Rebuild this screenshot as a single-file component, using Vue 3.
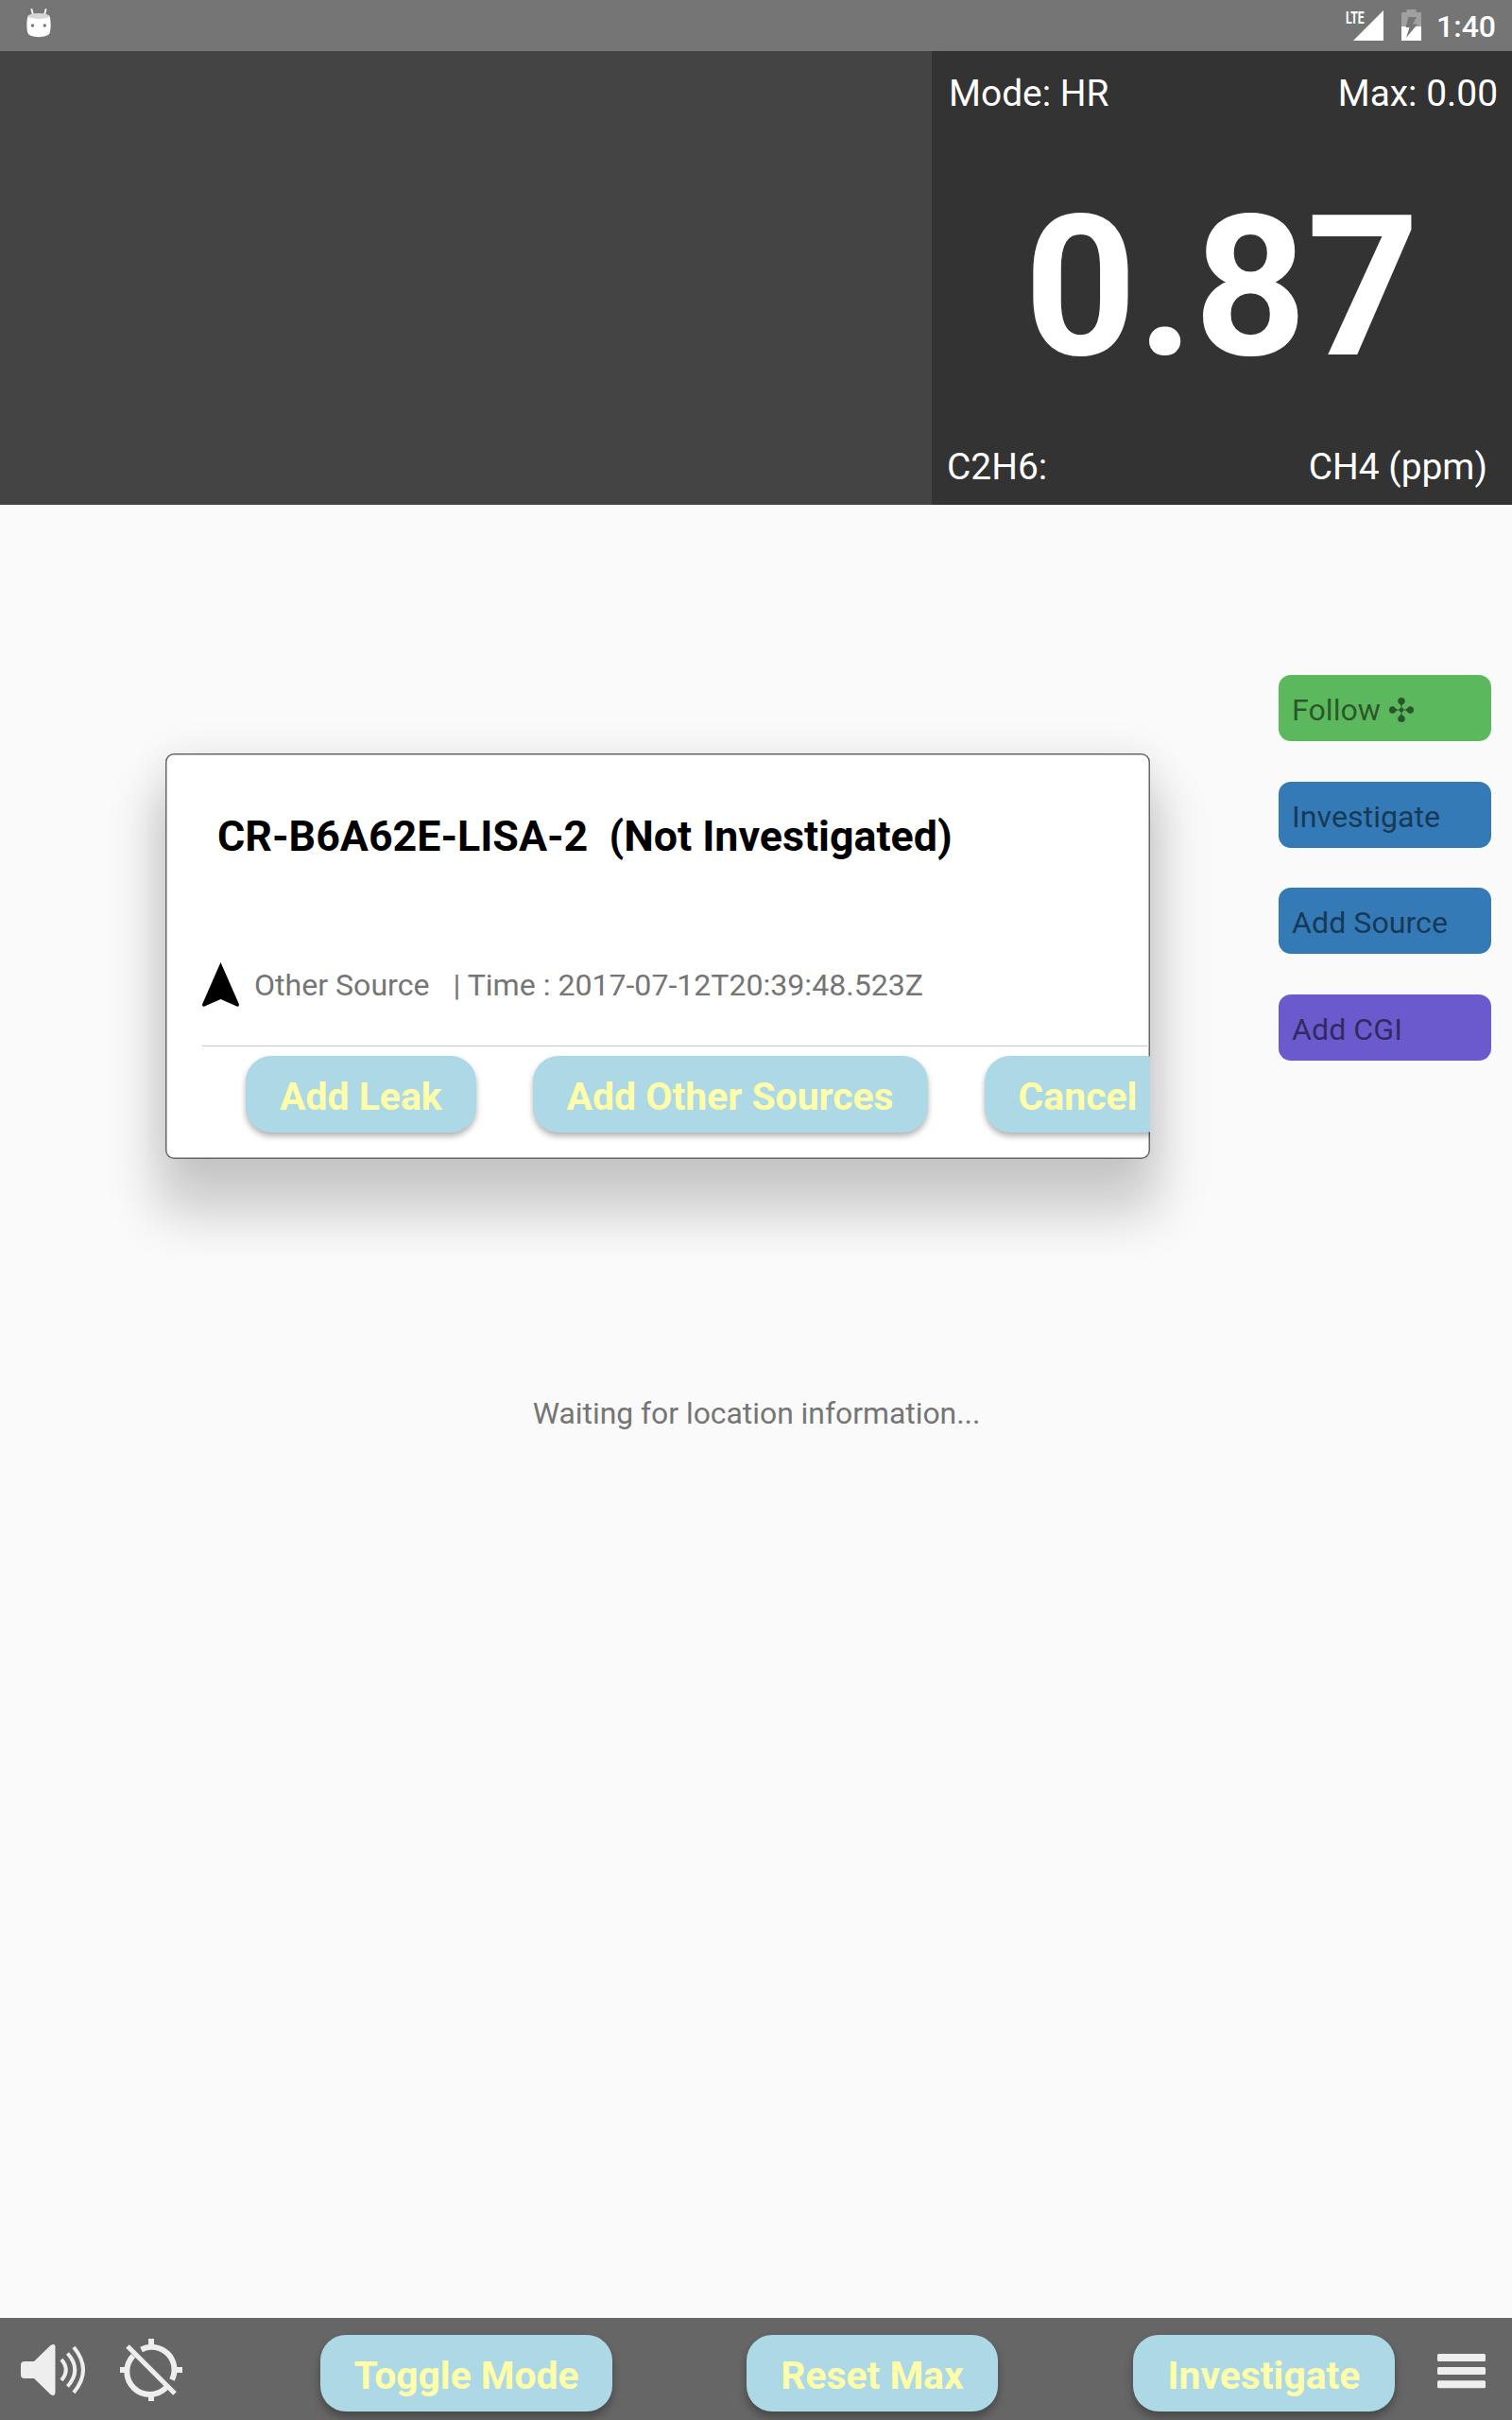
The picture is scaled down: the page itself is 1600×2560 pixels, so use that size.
<script setup>
const actions = [
  { label: 'Follow', color: '#5cb85c', icon: true },
  { label: 'Investigate', color: '#337ab7' },
  { label: 'Add Source', color: '#337ab7' },
  { label: 'Add CGI', color: '#6a5acd' },
]
const choices = ['Add Leak', 'Add Other Sources', 'Cancel']
</script>

<template>
  <div class="screen">
    <header class="status">
      <svg class="droid" width="26" height="31" viewBox="0 0 26 31">
        <path d="M5.500 1 7 7M20.500 1 19 7" stroke="#fff" stroke-width="1.8" stroke-linecap="round" />
        <path d="M1.500 8C0 13 0 22 1.500 26 3 31.500 23 31.500 24.500 26 26 22 26 13 24.500 8Z" fill="#fff" />
        <ellipse cx="13" cy="8" rx="11.500" ry="3" fill="#d6d6d6" />
        <circle cx="6.500" cy="18" r="1.700" fill="#757575" />
        <circle cx="19.300" cy="18" r="1.700" fill="#757575" />
      </svg>
      <div class="system">
        <div class="signal">
          <span class="lte">LTE</span>
          <svg width="32" height="32" viewBox="0 0 32 32"><path d="M32 0V32H0Z" fill="#fff" /></svg>
        </div>
        <svg class="battery" width="21" height="33" viewBox="0 0 21 33">
          <path d="M5.500 0H15.500V3H21V33H0V3H5.500Z" fill="#a0a0a0" />
          <path d="M0 18H21V33H0Z" fill="#fff" />
          <path d="M7.500 8H16L12 15.500H17L5 30 8.500 19H4.500Z" fill="#757575" />
        </svg>
        <span class="clock">1:40</span>
      </div>
    </header>

    <section class="readout">
      <div class="chart"></div>
      <div class="meter">
        <div class="row top"><span>Mode: HR</span><span>Max: 0.00</span></div>
        <div class="value">0.87</div>
        <div class="row bottom"><span>C2H6:</span><span>CH4 (ppm)</span></div>
      </div>
    </section>

    <main class="map">
      <p class="waiting">Waiting for location information...</p>

      <div class="actions">
        <button v-for="a in actions" :key="a.label" class="action" :style="{ background: a.color }">
          <span>{{ a.label }}</span>
          <svg v-if="a.icon" class="club" width="26" height="26" viewBox="0 0 26 26">
            <g v-for="r in [0, 90, 180, 270]" :key="r" :transform="`rotate(${r} 13 13)`">
              <path d="M12.500 13V8.500C12 6.800 9.200 6.300 9.200 3.800A3.800 3.800 0 0 1 16.800 3.800C16.800 6.300 14 6.800 13.500 8.500V13Z" />
            </g>
            <circle cx="13" cy="13" r="2.300" />
          </svg>
        </button>
      </div>

      <article class="card">
        <div class="clip">
          <h2>CR-B6A62E-LISA-2&nbsp; (Not Investigated)</h2>
          <div class="details">
            <svg class="arrow" width="39" height="47" viewBox="0 0 39 47">
              <path d="M19.500 0 39 44.500Q39 47.500 36.500 46.500L19.500 39 2.500 46.500Q0 47.500 0 44.500Z" />
            </svg>
            <span class="kind">Other Source</span>
            <span>| Time : 2017-07-12T20:39:48.523Z</span>
          </div>
          <div class="choices">
            <button v-for="c in choices" :key="c" class="pill">{{ c }}</button>
          </div>
        </div>
      </article>
    </main>

    <footer class="bar">
      <svg class="sound" width="70" height="56" viewBox="0 0 70 56">
        <path d="M4 19H14L31.500 2Q36.500-1 36.500 4V51Q36.500 57 31.500 54L14 37H4Q0 37 0 33V23Q0 19 4 19Z" fill="#eee" />
        <path d="M43 17Q52.500 28 43 39M49.500 10.500Q65 28 49.500 45.500M56 4Q76 28 56 52" fill="none" stroke="#eee" stroke-width="4" />
      </svg>
      <svg class="gps" width="66" height="66" viewBox="0 0 66 66" fill="none" stroke="#eee" stroke-width="6">
        <path d="M33 0V8M33 58V66M0 33H8M58 33H66" />
        <path d="M22.500 11.500A24 24 0 0 1 55 43.500M14 18A24 24 0 0 0 49 51.500" />
        <path d="M8 8 58 58" stroke-width="5.200" />
      </svg>
      <button class="pill toggle">Toggle Mode</button>
      <button class="pill reset">Reset Max</button>
      <button class="pill investigate">Investigate</button>
      <svg class="menu" width="52" height="38" viewBox="0 0 52 38" fill="#eee">
        <rect width="51" height="8" rx="1.500" />
        <rect y="14" width="51" height="8" rx="1.500" />
        <rect y="28.300" width="51" height="8" rx="1.500" />
      </svg>
    </footer>
  </div>
</template>

<style>
body {
  margin: 0;
}
</style>

<style scoped>
.screen {
  display: flex;
  flex-direction: column;
  width: 1600px;
  height: 2560px;
  overflow: hidden;
  background: #fafafa;
  color: #757575;
  font-family: Roboto, sans-serif;
  font-size: 32px;
}
svg {
  display: block;
  flex: none;
}
button {
  font-family: inherit;
  border: 0;
  margin: 0;
}
.status {
  display: flex;
  justify-content: space-between;
  box-sizing: border-box;
  height: 54px;
  flex: none;
  padding: 0 17px 0 28px;
  background: #757575;
  color: #fff;
}
.droid {
  margin-top: 9px;
}
.system {
  display: flex;
  align-items: flex-start;
}
.signal {
  display: flex;
  margin: 11px 19px 0 0;
}
.lte {
  width: 8px;
  font-size: 18px;
  line-height: 18px;
  font-weight: 700;
  transform: translateY(-1px) scaleX(0.68);
  transform-origin: 0 0;
}
.battery {
  margin: 10px 16px 0 0;
}
.clock {
  font-size: 32px;
  font-weight: 500;
  line-height: 56px;
}
.readout {
  display: flex;
  flex: none;
  height: 480px;
}
.chart {
  width: 986px;
  background: #444;
}
.meter {
  flex: 1;
  display: flex;
  flex-direction: column;
  justify-content: space-between;
  background: #333;
  color: #fff;
  font-size: 38.9px;
}
.row {
  display: flex;
  justify-content: space-between;
  line-height: 48px;
}
.top {
  padding: 21px 15px 0 18px;
}
.bottom {
  padding: 0 26px 16px 16px;
}
.value {
  padding-top: 14px;
  text-align: center;
  font-size: 208px;
  font-weight: 700;
  line-height: 240px;
}
.map {
  position: relative;
  flex: 1;
  display: flex;
  justify-content: center;
  align-items: center;
}
.waiting {
  margin: 0;
  padding: 4px 0 0 1px;
  font-size: 31.85px;
}
.actions {
  position: absolute;
  top: 180px;
  right: 22px;
  display: flex;
  flex-direction: column;
  gap: 42.5px;
}
.action {
  display: flex;
  align-items: center;
  gap: 9px;
  width: 225px;
  height: 70px;
  padding: 4px 14px 0;
  border-radius: 13px;
  color: rgba(0, 0, 0, 0.54);
  font-size: 32.2px;
}
.club {
  fill: #2a552a;
}
.card {
  position: absolute;
  left: 175px;
  top: 263px;
  width: 1042px;
  height: 429px;
  border-radius: 9px;
  background: #fff;
  box-shadow: 0 48px 54px 10px rgba(0, 0, 0, 0.19), 0 0 40px rgba(0, 0, 0, 0.08);
}
.clip {
  box-sizing: border-box;
  height: 100%;
  overflow: hidden;
  border-radius: 9px;
  padding-left: 39px;
  box-shadow: inset 0 0 0 1.5px #666;
}
h2 {
  margin: 0;
  padding: 60px 0 0 16px;
  color: #000;
  font-size: 44.75px;
  line-height: 56px;
  font-weight: 700;
  white-space: nowrap;
}
.details {
  display: flex;
  align-items: center;
  height: 87px;
  margin-top: 85px;
  padding-bottom: 21px;
  border-bottom: 1px solid #c8c8c8;
  margin-right: 1px;
  font-size: 32.1px;
}
.arrow {
  margin-right: 16px;
}
.kind {
  margin-right: 25px;
}
.choices {
  display: flex;
  gap: 60px;
  padding: 10px 0 0 46px;
}
.pill {
  flex: none;
  height: 81px;
  padding: 4px 36px 0;
  border-radius: 27px;
  background: #add8e6;
  color: #ffffaa;
  font-size: 40.9px;
  font-weight: 700;
  white-space: nowrap;
  box-shadow: 0 4px 6px rgba(0, 0, 0, 0.3);
}
.bar {
  display: flex;
  align-items: flex-start;
  flex: none;
  height: 108px;
  background: #666;
}
.bar .pill {
  margin-top: 18px;
  padding: 4px 0 0;
  font-size: 40.8px;
  box-shadow: 0 6px 10px rgba(0, 0, 0, 0.3);
}
.bar .toggle {
  width: 309px;
  margin-left: 146px;
}
.bar .reset {
  width: 266px;
  margin-left: 142px;
}
.bar .investigate {
  width: 277px;
  margin-left: 143px;
}
.sound {
  margin: 27px 0 0 22px;
}
.gps {
  margin: 22px 0 0 35px;
}
.menu {
  margin: 38px 0 0 45px;
}
</style>
